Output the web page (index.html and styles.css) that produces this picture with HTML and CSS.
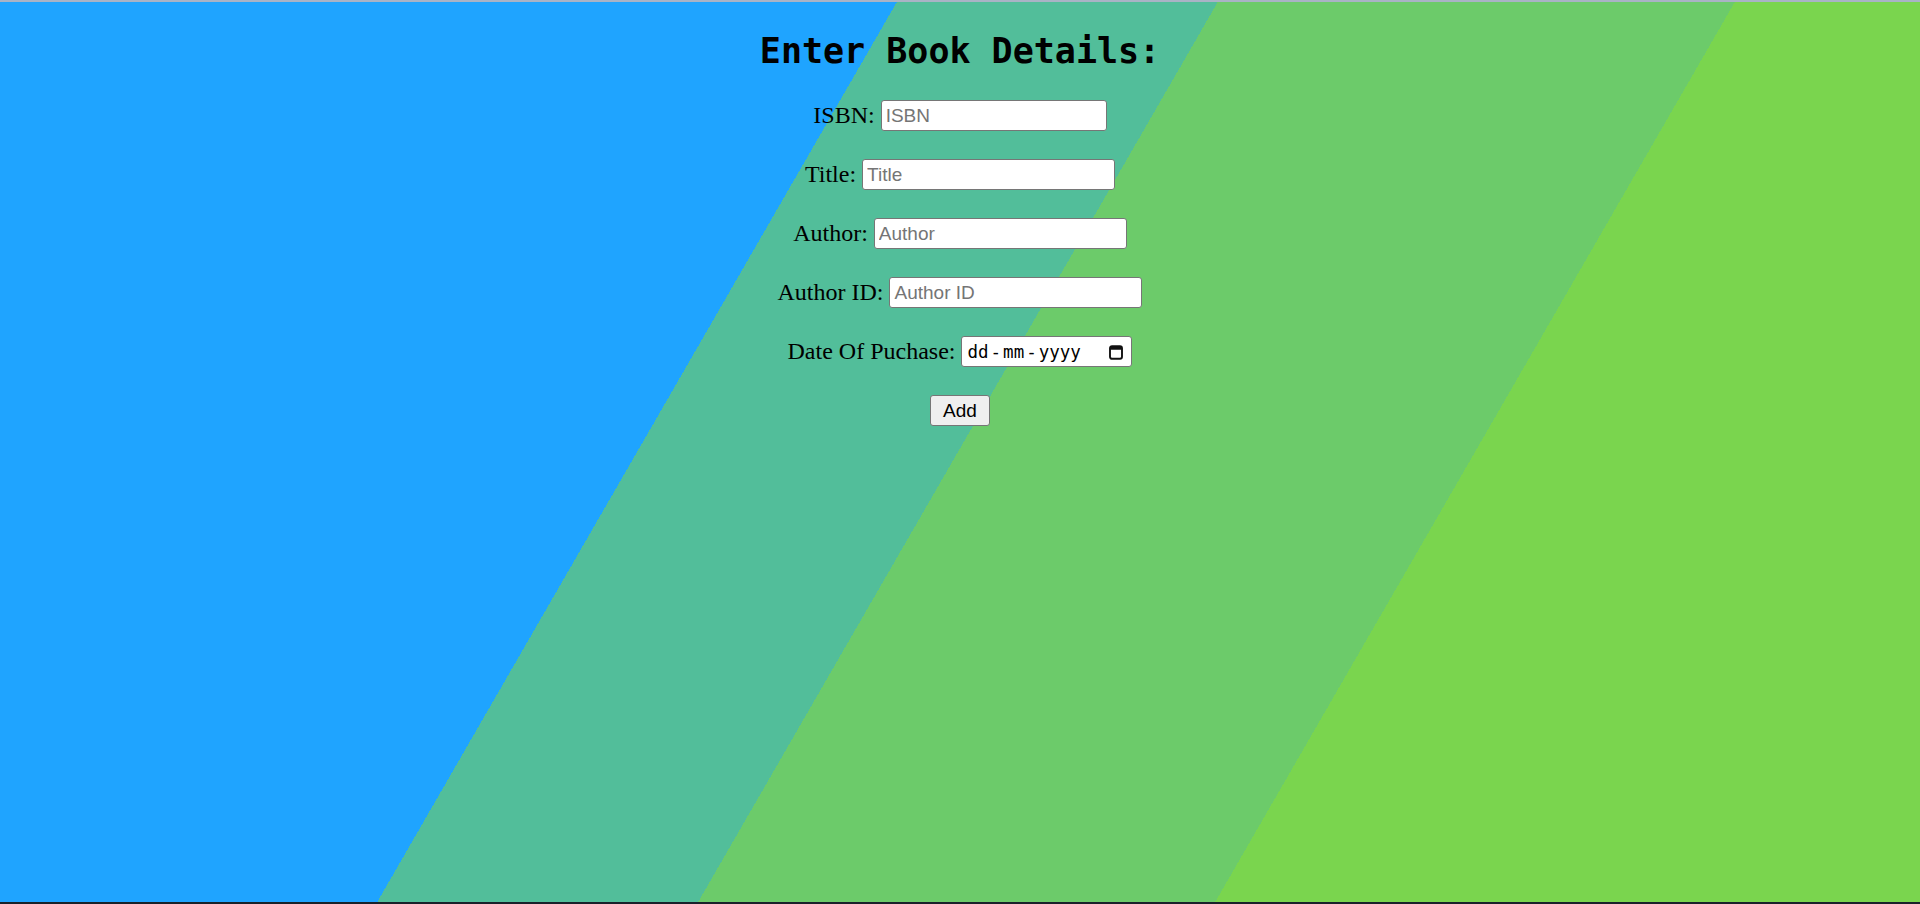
FILE: index.html
```html
<!DOCTYPE html>
<html lang="en">
<head>
<meta charset="utf-8">
<title>Enter Book Details</title>
<link rel="stylesheet" href="styles.css">
</head>
<body>
<div class="page">
  <h1 class="title">Enter Book Details:</h1>
  <form class="book-form">
    <div class="row"><label class="label" for="isbn">ISBN:</label><input id="isbn" class="field field-short" type="text" placeholder="ISBN"></div>
    <div class="row"><label class="label" for="title">Title:</label><input id="title" class="field" type="text" placeholder="Title"></div>
    <div class="row"><label class="label" for="author">Author:</label><input id="author" class="field" type="text" placeholder="Author"></div>
    <div class="row"><label class="label" for="authorid">Author ID:</label><input id="authorid" class="field" type="text" placeholder="Author ID"></div>
    <div class="row"><label class="label">Date Of Puchase:</label><div class="date-field"><span class="date-text"><span class="seg">dd</span><span class="sep">-</span><span class="seg">mm</span><span class="sep">-</span><span class="seg">yyyy</span></span><svg class="cal-icon" width="14" height="15" viewBox="0 0 14 15"><rect x="1" y="1.2" width="12" height="12.6" rx="2" ry="2" fill="none" stroke="#111" stroke-width="1.9"/><rect x="1" y="1.2" width="12" height="3.6" rx="1.2" fill="#111"/></svg></div></div>
    <div class="row"><button type="button" class="add-btn">Add</button></div>
  </form>
</div>
</body>
</html>
```

FILE: styles.css
```css
html, body {
  margin: 0;
  padding: 0;
}

.page {
  box-sizing: border-box;
  min-height: 100vh;
  border-top: 2px solid #a9b3c6;
  border-bottom: 2px solid #19212a;
  padding-top: 30px;
  display: flex;
  flex-direction: column;
  align-items: center;
  background: linear-gradient(120deg,
    #1fa4ff 0, #1fa4ff 776.7px,
    #52be9a 776.7px, #52be9a 1054.6px,
    #6ccb6a 1054.6px, #6ccb6a 1502.4px,
    #7ad54e 1502.4px);
}

.title {
  margin: 0;
  font-family: "DejaVu Sans Mono", "Liberation Mono", monospace;
  font-weight: bold;
  font-size: 35px;
  line-height: 38px;
  color: #000;
}

.book-form {
  margin-top: 30px;
  display: flex;
  flex-direction: column;
  align-items: center;
  gap: 28px;
}

.row {
  height: 31px;
  display: flex;
  align-items: center;
  justify-content: center;
  gap: 6px;
}

.label {
  font-family: "Liberation Serif", "Times New Roman", serif;
  font-size: 24px;
  color: #000;
}

.field {
  box-sizing: border-box;
  width: 253px;
  height: 31px;
  margin: 0;
  padding: 0 4px;
  border: 1px solid #767676;
  border-radius: 3px;
  background: #fff;
  font-family: "Liberation Sans", Arial, sans-serif;
  font-size: 19px;
  color: #000;
  outline: none;
}

.field::placeholder {
  color: #757575;
}

.field-short {
  width: 226px;
}

.date-field {
  box-sizing: border-box;
  width: 171px;
  height: 31px;
  border: 1px solid #767676;
  border-radius: 3px;
  background: #fff;
  display: flex;
  align-items: center;
  justify-content: space-between;
  padding: 0 8px 0 5px;
}

.date-text {
  display: flex;
  font-family: "DejaVu Sans Mono", "Liberation Mono", monospace;
  font-size: 17.5px;
  color: #000;
}

.sep {
  margin: 0 2px;
}

.cal-icon {
  display: block;
  margin-top: 1px;
}

.add-btn {
  box-sizing: border-box;
  width: 60px;
  height: 31px;
  margin: 0;
  padding: 0;
  border: 1px solid #767676;
  border-radius: 3px;
  background: #efefef;
  font-family: "Liberation Sans", Arial, sans-serif;
  font-size: 19px;
  color: #000;
}
```
